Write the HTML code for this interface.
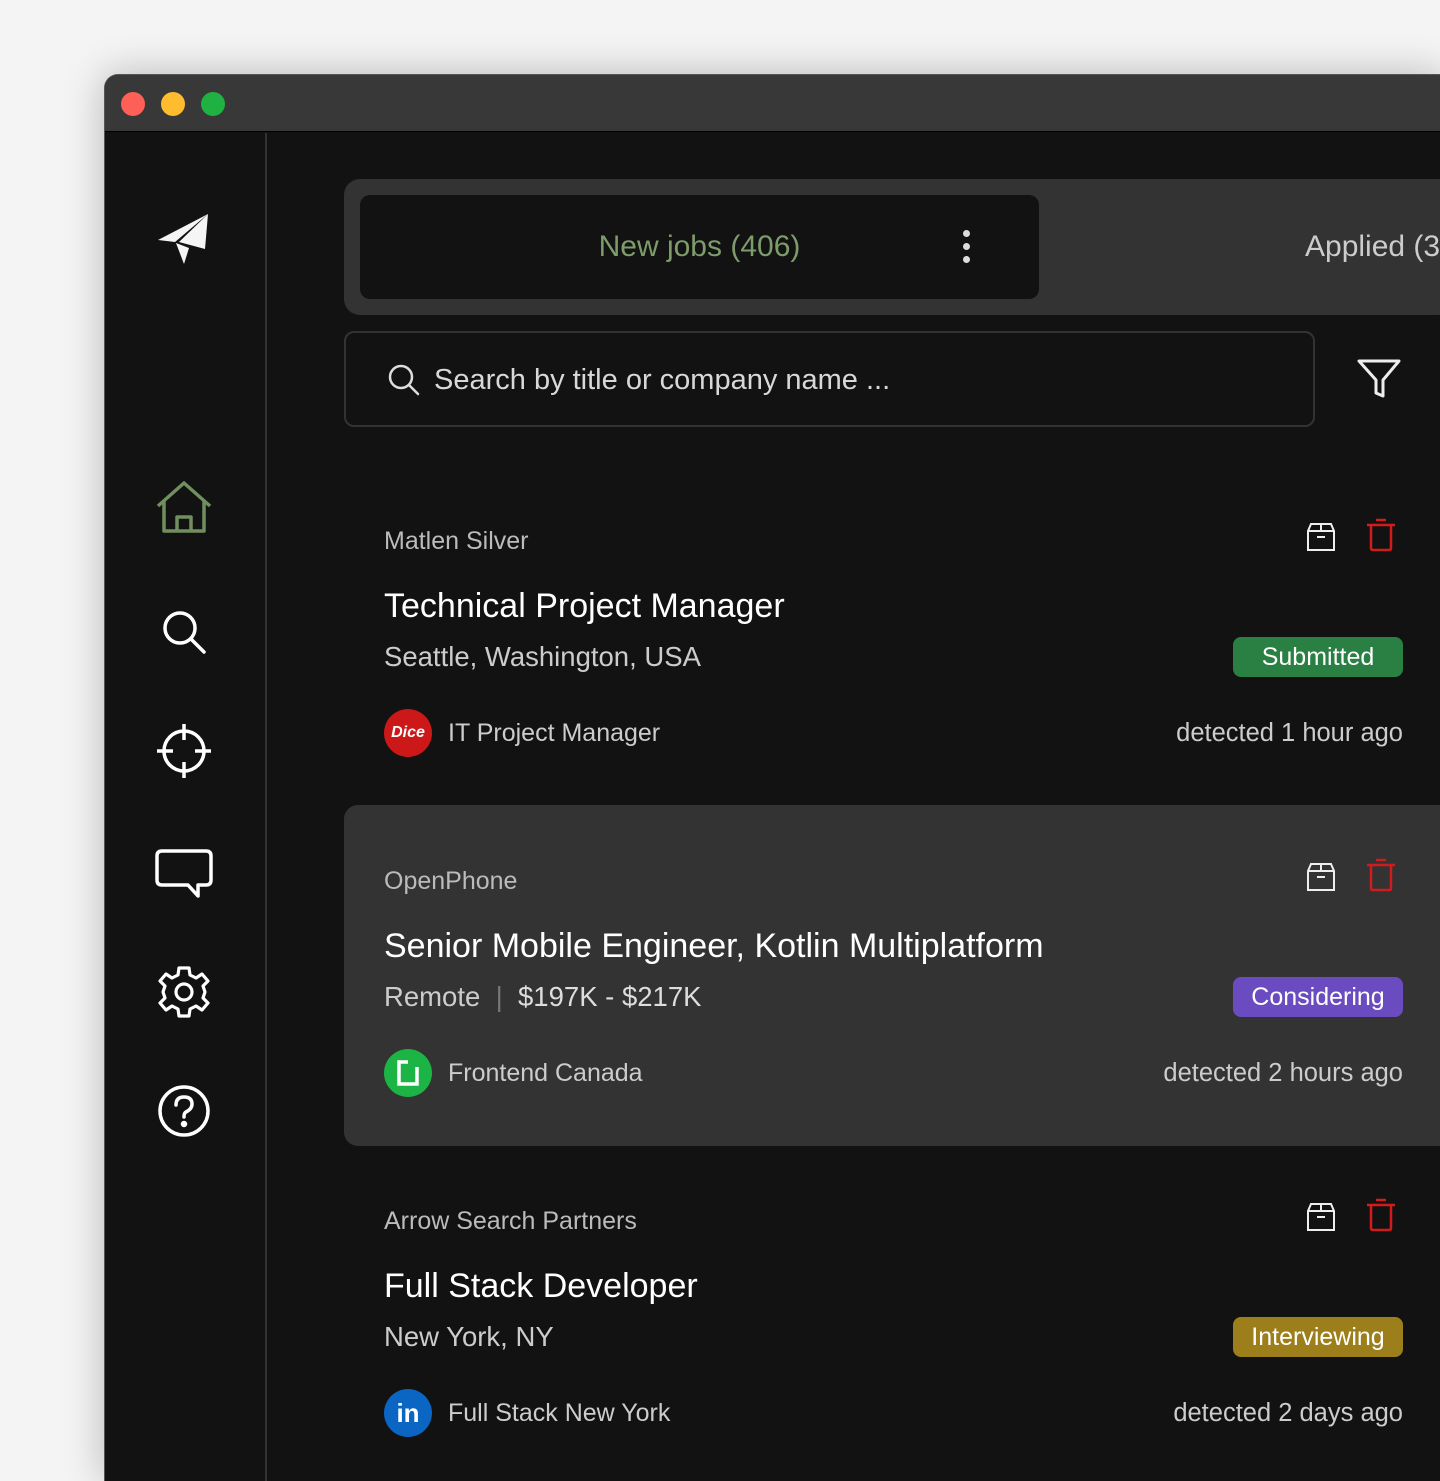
<!DOCTYPE html>
<html><head><meta charset="utf-8"><style>
*{margin:0;padding:0;box-sizing:border-box}
html,body{width:1440px;height:1481px;overflow:hidden}
body{background:#f4f4f4;font-family:"Liberation Sans",sans-serif;position:relative}
.win{position:absolute;left:104px;top:74px;width:1340px;height:1407px;background:#121212;border-radius:14px 0 0 0;box-shadow:0 0 40px rgba(0,0,0,.25);overflow:hidden;border:1px solid #555;border-bottom:none;border-right:none}
.tb{position:absolute;left:0;top:0;right:0;height:57px;background:#383838;border-bottom:1px solid #000}
.dot{position:absolute;top:17px;width:24px;height:24px;border-radius:50%}
.side{position:absolute;left:160px;top:58px;width:2px;bottom:0;background:#333}
.a{position:absolute}
.t{position:absolute;white-space:nowrap}
.badge{position:absolute;left:1233px;width:170px;height:40px;border-radius:8px;color:#fff;font-size:25px;text-align:center;line-height:40px}
.ic{position:absolute}
</style></head><body>
<div class="win">
<div class="tb"><div class="dot" style="left:16px;background:#fe5f57"></div><div class="dot" style="left:56px;background:#febc2e"></div><div class="dot" style="left:96px;background:#1fb141"></div></div>
<div class="side"></div>
</div>
<svg class="ic" style="left:155px;top:212px" width="56" height="56" viewBox="0 0 56 56"><path d="M53 2 L3 28 L20 30 Z" fill="#f5f5f5"/><path d="M53 2 L24 30 L50 37 Z" fill="#f5f5f5"/><path d="M21 31 L29 52 L34 36 Z" fill="#f5f5f5"/></svg>
<svg class="ic" style="left:155px;top:480px" width="58" height="56" viewBox="0 0 58 56" fill="none" stroke="#718f5e" stroke-width="3.5" stroke-linejoin="round"><path d="M3 26 L29 3 L55 26"/><path d="M9 21 V51 H49 V21"/><path d="M22 51 V37 H36 V51"/></svg>
<svg class="ic" style="left:158px;top:606px" width="52" height="52" viewBox="0 0 52 52" fill="none" stroke="#fff" stroke-width="3.5"><circle cx="22" cy="22" r="15"/><path d="M33 33 L46 46" stroke-linecap="round"/></svg>
<svg class="ic" style="left:155px;top:722px" width="58" height="58" viewBox="0 0 58 58" fill="none" stroke="#fff" stroke-width="3.5"><circle cx="29" cy="29" r="20"/><path d="M29 2 V18 M29 40 V56 M2 29 H18 M40 29 H56"/></svg>
<svg class="ic" style="left:154px;top:848px" width="60" height="54" viewBox="0 0 60 54" fill="none" stroke="#fff" stroke-width="3.5" stroke-linejoin="round"><path d="M8 3 H52 Q57 3 57 8 V32 Q57 37 52 37 H44 V48 L34 37 H8 Q3 37 3 32 V8 Q3 3 8 3 Z"/></svg>
<svg class="ic" style="left:157px;top:965px" width="54" height="54" viewBox="0 0 54 54" fill="none" stroke="#fff" stroke-width="3.2" stroke-linejoin="round"><path d="M22 3 H32 L33 10 L39 13 L45 9 L51 16 L46 21 L48 27 L46 33 L51 38 L45 45 L39 41 L33 44 L32 51 H22 L21 44 L15 41 L9 45 L3 38 L8 33 L6 27 L8 21 L3 16 L9 9 L15 13 L21 10 Z"/><circle cx="27" cy="27" r="8"/></svg>
<svg class="ic" style="left:157px;top:1084px" width="54" height="54" viewBox="0 0 54 54" fill="none" stroke="#fff" stroke-width="3.5" stroke-linecap="round"><circle cx="27" cy="27" r="24"/><path d="M19 21 Q19 13 27 13 Q35 13 35 20 Q35 25 29 28 Q27 29 27 33"/><circle cx="27" cy="40" r="1.5" fill="#fff"/></svg>

<div class="a" style="left:344px;top:179px;width:1110px;height:136px;background:#333;border-radius:16px"></div>
<div class="a" style="left:360px;top:195px;width:679px;height:104px;background:#121212;border-radius:10px"></div>
<div class="t" style="left:360px;width:679px;text-align:center;top:230px;font-size:30px;color:#7e9c6b">New jobs (406)</div>
<div class="a" style="left:963px;top:230px;width:7px;height:7px;border-radius:50%;background:#ddd"></div>
<div class="a" style="left:963px;top:243px;width:7px;height:7px;border-radius:50%;background:#ddd"></div>
<div class="a" style="left:963px;top:256px;width:7px;height:7px;border-radius:50%;background:#ddd"></div>
<div class="t" style="left:1305px;top:230px;font-size:30px;color:#ccc">Applied (3</div>

<div class="a" style="left:344px;top:331px;width:971px;height:96px;border:2px solid #333;border-radius:10px"></div>
<svg class="ic" style="left:387px;top:363px" width="34" height="34" viewBox="0 0 34 34" fill="none" stroke="#ddd" stroke-width="2.5"><circle cx="14" cy="14" r="11"/><path d="M22 22 L31 31" stroke-linecap="round"/></svg>
<div class="t" style="left:434px;top:364px;font-size:29px;color:#d8d8d8">Search by title or company name ...</div>
<svg class="ic" style="left:1356px;top:356px" width="46" height="46" viewBox="0 0 46 46" fill="none" stroke="#eee" stroke-width="3" stroke-linejoin="round"><path d="M3 5 H43 L27 24 V40 L20 37 V24 Z"/></svg>

<div class="a" style="left:344px;top:805px;width:1110px;height:341px;background:#333;border-radius:14px"></div>

<div id="cards"></div>
<script>
const cards=[
{y:0,co:"Matlen Silver",title:"Technical Project Manager",loc:"Seattle, Washington, USA",badge:"Submitted",bc:"#2a7f43",src:"IT Project Manager",det:"detected 1 hour ago",logo:"dice"},
{y:340,co:"OpenPhone",title:"Senior Mobile Engineer, Kotlin Multiplatform",loc:"Remote <span style='color:#777'>&nbsp;|&nbsp;</span> <span style='color:#ddd'>$197K - $217K</span>",badge:"Considering",bc:"#6a4cc0",src:"Frontend Canada",det:"detected 2 hours ago",logo:"fc"},
{y:680,co:"Arrow Search Partners",title:"Full Stack Developer",loc:"New York, NY",badge:"Interviewing",bc:"#9c7f1b",src:"Full Stack New York",det:"detected 2 days ago",logo:"li"}];
let h="";
for(const c of cards){const y=c.y;
h+=`<div class="t" style="left:384px;top:${527+y}px;font-size:25px;color:#bbb">${c.co}</div>
<div class="t" style="left:384px;top:${587+y}px;font-size:34px;color:#fff">${c.title}</div>
<div class="t" style="left:384px;top:${641+y}px;font-size:27.5px;color:#ccc">${c.loc}</div>
<div class="badge" style="top:${637+y}px;background:${c.bc}">${c.badge}</div>
<div class="t" style="left:448px;top:${719+y}px;font-size:25px;color:#ccc">${c.src}</div>
<div class="t" style="right:37px;top:${719+y}px;font-size:25.5px;color:#ccc">${c.det}</div>
<svg class="ic" style="left:1305px;top:${521+y}px" width="32" height="32" viewBox="0 0 32 32" fill="none" stroke="#eee" stroke-width="2"><path d="M6 3 H26 L29 10 V29 H3 V10 Z M3 10 H29 M16 3 V10 M12 16 H20"/></svg>
<svg class="ic" style="left:1366px;top:${518+y}px" width="30" height="34" viewBox="0 0 30 34" fill="none" stroke="#d01c1c" stroke-width="2.5"><path d="M1 7 H29 M10 2 H20 M5 7 V30 Q5 32 7 32 H23 Q25 32 25 30 V7"/></svg>`;
let lg="";
if(c.logo=="dice")lg=`<div class="a" style="left:384px;top:${709+y}px;width:48px;height:48px;border-radius:50%;background:#cc1818;color:#fff;font:italic bold 16px 'Liberation Sans',sans-serif;text-align:center;line-height:48px">Dice</div>`;
if(c.logo=="fc")lg=`<div class="a" style="left:384px;top:1049px;width:48px;height:48px;border-radius:50%;background:#1db446"></div><svg class="ic" style="left:396px;top:1059px" width="24" height="28" viewBox="0 0 24 28" fill="none" stroke="#fff" stroke-width="3.5"><path d="M12 3 H3 V25 H21 V8"/></svg>`;
if(c.logo=="li")lg=`<div class="a" style="left:384px;top:1389px;width:48px;height:48px;border-radius:50%;background:#0a66c2;color:#fff;font:bold 26px 'Liberation Sans',sans-serif;text-align:center;line-height:48px">in</div>`;
h+=lg;}
document.getElementById("cards").innerHTML=h;
</script>
</body></html>
